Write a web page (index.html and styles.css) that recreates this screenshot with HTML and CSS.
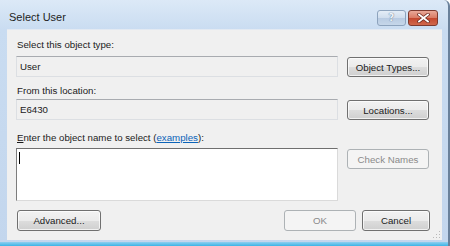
FILE: index.html
```html
<!DOCTYPE html>
<html>
<head>
<meta charset="utf-8">
<link rel="stylesheet" href="styles.css">
</head>
<body>
<div class="window">
  <div class="titlebar">
    <span class="title">Select User</span>
    <div class="caption">
      <div class="cap help"><span>?</span></div>
      <div class="cap close">
        <svg width="13" height="10" viewBox="0 0 13 10">
          <path d="M2 1.5 L11 8.5 M11 1.5 L2 8.5" stroke="#6b2a20" stroke-width="3.4" stroke-linecap="square"/>
          <path d="M2 1.5 L11 8.5 M11 1.5 L2 8.5" stroke="#ffffff" stroke-width="1.8" stroke-linecap="square"/>
        </svg>
      </div>
    </div>
  </div>
  <div class="client">
    <div class="label l1">Select this object type:</div>
    <div class="row r1">
      <div class="textbox ro">User</div>
      <button class="btn">Object Types...</button>
    </div>
    <div class="label l2">From this location:</div>
    <div class="row r2">
      <div class="textbox ro">E6430</div>
      <button class="btn">Locations...</button>
    </div>
    <div class="label l3"><u>E</u>nter the object name to select (<a class="link">examples</a>):</div>
    <div class="row r3">
      <div class="textarea"><span class="caret"></span></div>
      <button class="btn disabled">Check Names</button>
    </div>
    <div class="footer">
      <button class="btn adv">Advanced...</button>
      <div class="spacer"></div>
      <button class="btn ok disabled">OK</button>
      <button class="btn cancel">Cancel</button>
    </div>
    <div class="grip"></div>
  </div>
  <div class="bottomline"></div>
</div>
</body>
</html>
```

FILE: styles.css
```css
html, body {
  margin: 0;
  padding: 0;
  width: 450px;
  height: 246px;
  overflow: hidden;
  background: #ffffff;
}

.window {
  width: 450px;
  height: 246px;
  box-sizing: border-box;
  background: linear-gradient(to bottom, #dce9f7 0px, #c9dcf1 30px, #c3d6ed 100%);
  border-right: 2px solid #6a819b;
  border-top-right-radius: 6px;
  display: flex;
  flex-direction: column;
  font-family: "Liberation Sans", Arial, sans-serif;
  font-size: 9.7px;
  color: #1b1b1b;
  position: relative;
}

.titlebar {
  height: 29px;
  display: flex;
  align-items: flex-start;
  padding-left: 9px;
  padding-right: 10px;
}

.title {
  font-size: 11px;
  margin-top: 11px;
  color: #1e1e1e;
}

.caption {
  margin-left: auto;
  margin-top: 10px;
  display: flex;
  gap: 2px;
}

.cap {
  height: 16px;
  border-radius: 3px;
  box-sizing: border-box;
  display: flex;
  align-items: center;
  justify-content: center;
}

.help {
  width: 29px;
  border: 1px solid #8da3bd;
  background: linear-gradient(to bottom, #e4edf7 0%, #cfdded 50%, #b8cbe2 51%, #c6d7ea 100%);
}

.help span {
  font-family: "DejaVu Sans", sans-serif;
  font-weight: bold;
  font-size: 10px;
  color: #eef3f9;
  text-shadow: 0 0 1px #6c7f96, 0 0 1px #6c7f96;
  line-height: 1;
}

.close {
  width: 30px;
  border: 1px solid #7d3a2f;
  background: linear-gradient(to bottom, #e9a898 0%, #d97a63 50%, #c4472e 51%, #d0684c 100%);
}

.client {
  flex: 1;
  margin-left: 7px;
  margin-right: 6px;
  background: #f0f0f0;
  border-top: 1px solid #e2e9f2;
  padding: 8px 12px 0 9px;
  display: flex;
  flex-direction: column;
  position: relative;
}

.label {
  height: 13px;
  line-height: 13px;
  margin-left: 1px;
}

.l2 { margin-top: 7px; }
.l3 { margin-top: 11px; }

.label u {
  text-decoration: underline;
}

.link {
  color: #0b63b8;
  text-decoration: underline;
}

.row {
  display: flex;
  align-items: flex-start;
  gap: 9px;
}

.r1 { margin-top: 5px; }
.r2 { margin-top: 2px; }
.r3 { margin-top: 4px; }

.textbox {
  width: 322px;
  height: 21px;
  box-sizing: border-box;
  border: 1px solid #dcdfe3;
  border-top-color: #a8abb0;
  padding-left: 3px;
  line-height: 19px;
}

.textbox.ro {
  background: #f0f0f0;
}

.textarea {
  width: 322px;
  height: 53px;
  box-sizing: border-box;
  background: #ffffff;
  border: 1px solid #dadada;
  border-top-color: #6f6f6f;
  border-left-color: #7d7d7d;
  padding: 3px 0 0 2px;
}

.caret {
  display: block;
  width: 1px;
  height: 12px;
  background: #000;
}

.btn {
  width: 82px;
  height: 20px;
  box-sizing: border-box;
  margin-top: 1px;
  border: 1px solid #707070;
  border-radius: 3px;
  background: linear-gradient(to bottom, #f2f2f2 0%, #ebebeb 50%, #dddddd 51%, #cfcfcf 100%);
  box-shadow: inset 0 0 0 1px rgba(255,255,255,0.7);
  font-family: "Liberation Sans", Arial, sans-serif;
  font-size: 9.7px;
  color: #1b1b1b;
  padding: 0;
  text-align: center;
}

.btn.disabled {
  border-color: #adb2b5;
  background: #f4f4f4;
  box-shadow: none;
  color: #8a8a8a;
}

.footer {
  display: flex;
  align-items: flex-start;
  margin-top: 8px;
  gap: 6px;
}

.footer .btn {
  height: 21px;
}

.btn.adv {
  width: 84px;
  margin-left: 1px;
}

.spacer {
  flex: 1;
}

.btn.ok {
  width: 72px;
}

.btn.cancel {
  width: 68px;
}

.grip {
  position: absolute;
  right: 2px;
  bottom: 2px;
  width: 8px;
  height: 8px;
  background:
    radial-gradient(circle, #b9b9b9 0.8px, transparent 1px) 0 0 / 3px 3px;
  clip-path: polygon(100% 0, 100% 100%, 0 100%);
}

.bottomline {
  height: 4px;
  margin-top: 2px;
  background: linear-gradient(to bottom, #8fcff0, #3ab4e6);
}
```
